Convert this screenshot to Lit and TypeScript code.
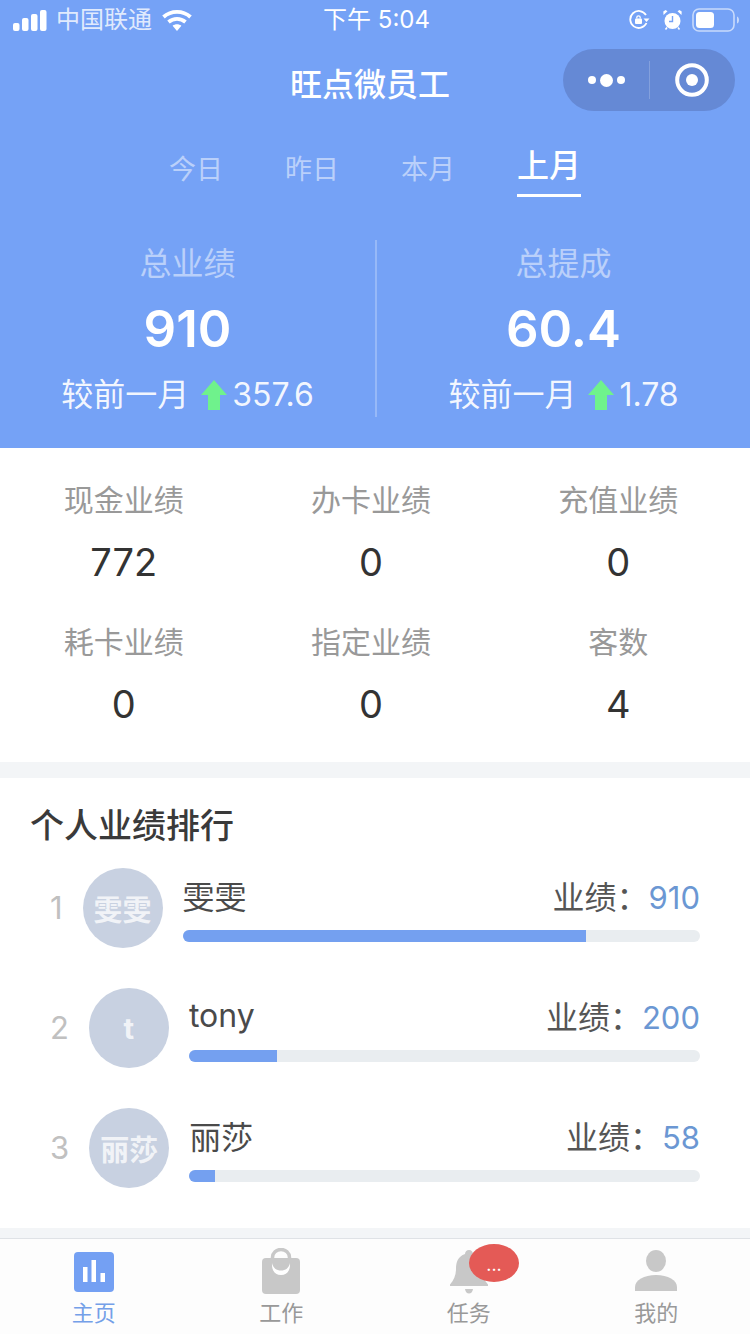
// Staff performance page: blue summary header, metric grid, ranking list and tab bar
import { LitElement, html, css, svg } from "lit";
import { customElement } from "lit/decorators.js";

const FONT_TABS = ["今日", "昨日", "本月", "上月"];

const SUMMARY = [
  { label: "总业绩", value: "910", diff: "357.6" },
  { label: "总提成", value: "60.4", diff: "1.78" },
];

const METRICS = [
  { label: "现金业绩", value: "772" },
  { label: "办卡业绩", value: "0" },
  { label: "充值业绩", value: "0" },
  { label: "耗卡业绩", value: "0" },
  { label: "指定业绩", value: "0" },
  { label: "客数", value: "4" },
];

const RANKS = [
  { rank: 1, avatar: "雯雯", name: "雯雯", score: "910", pct: 78 },
  { rank: 2, avatar: "t", name: "tony", score: "200", pct: 17.2 },
  { rank: 3, avatar: "丽莎", name: "丽莎", score: "58", pct: 5.1 },
];

const signalIcon = svg`<svg width="35" height="21" viewBox="0 0 35 21"><g fill="#fff">
  <rect x="0" y="13" width="6.500" height="8" rx="2"/><rect x="9" y="8" width="6.500" height="13" rx="2"/>
  <rect x="18" y="4" width="6.500" height="17" rx="2"/><rect x="27" y="0" width="6.500" height="21" rx="2"/></g></svg>`;

const wifiIcon = svg`<svg width="30" height="22" viewBox="0 0 30 22" fill="none" stroke="#fff" stroke-width="3.800">
  <path d="M1.500 8C9 1.200 21 1.200 28.500 8"/><path d="M6.500 13c5-4.200 12-4.200 17 0"/>
  <path d="M15 22l-4.400-5.300c2.500-2 6.300-2 8.800 0z" fill="#fff" stroke="none"/></svg>`;

const lockIcon = svg`<svg width="21" height="20" viewBox="0 0 21 20" fill="none" stroke="#fff" stroke-width="1.800">
  <path d="M17.500 13A8.500 8.500 0 1 1 17 5"/><path d="M14.500 8.500h6l-3 3.500z" fill="#fff" stroke="none"/>
  <rect x="6" y="8.500" width="7" height="5.500" rx="1" fill="#fff" stroke="none"/><path d="M7.800 8.500V7.500a1.700 1.700 0 0 1 3.400 0v1" stroke-width="1.300"/></svg>`;

const alarmIcon = svg`<svg width="19" height="20" viewBox="0 0 19 20">
  <circle cx="9.500" cy="11" r="8" fill="#fff"/><path d="M9.500 6v5.500H6" fill="none" stroke="#75a2f6" stroke-width="1.400"/>
  <path d="M.5 5l4-3.800L2.500 0 .3 1.600zM18.500 5l-4-3.800 2-1.200 2.200 1.600z" fill="#fff"/>
  <path d="M4 17.500l-1.500 2M15 17.500l1.500 2" stroke="#fff" stroke-width="1.600"/></svg>`;

const batteryIcon = svg`<svg width="48" height="24" viewBox="0 0 48 24">
  <rect x="1" y="1" width="41" height="22" rx="6" fill="none" stroke="#fff" stroke-opacity=".6" stroke-width="1.600"/>
  <rect x="4" y="4" width="18" height="16" rx="3.500" fill="#fff"/>
  <path d="M45 8.500c1.500.5 2 2 2 3.500s-.5 3-2 3.500z" fill="#fff" fill-opacity=".6"/></svg>`;

const targetIcon = svg`<svg width="34" height="34" viewBox="0 0 34 34">
  <circle cx="17" cy="17" r="14.800" fill="none" stroke="#fff" stroke-width="4"/><circle cx="17" cy="17" r="6" fill="#fff"/></svg>`;

const arrowIcon = svg`<svg width="26" height="30" viewBox="0 0 26 30"><path d="M13 0l13 15h-7v15H7V15H0z" fill="#6ff28c"/></svg>`;

const homeIcon = svg`<svg width="40" height="42" viewBox="0 -2 40 42"><rect width="40" height="40" rx="4" fill="#74a0f3"/>
  <g fill="#fff"><rect x="9" y="15" width="4.500" height="15"/><rect x="17.500" y="8" width="4.500" height="22"/><rect x="26.500" y="21" width="4.500" height="9"/></g></svg>`;

const bagIcon = svg`<svg width="38" height="46" viewBox="0 0 38 46">
  <path d="M10.500 13V9.500a8.500 8 0 0 1 17 0V13" fill="none" stroke="#c8c8c8" stroke-width="3.500"/>
  <path d="M4 10h30a4 4 0 0 1 4 4v28a4 4 0 0 1-4 4H4a4 4 0 0 1-4-4V14a4 4 0 0 1 4-4z" fill="#c8c8c8"/>
  <path d="M10 15c1 5 4.500 7.500 9 7.500s8-2.500 9-7.500c.500 7.500-3 12-9 12s-9.500-4.500-9-12z" fill="#fff"/></svg>`;

const bellIcon = svg`<svg width="38" height="46" viewBox="0 0 38 46" fill="#c8c8c8">
  <path d="M19 2c-2.500 0-4 1.700-4 4C8 8.500 6 14 6 21c0 6-2 11-6 15.500V38h38v-1.500C34 32 32 27 32 21c0-7-2-12.500-9-15 0-2.300-1.500-4-4-4z"/>
  <path d="M15 41h8c-.5 3-2 4.500-4 4.500s-3.500-1.500-4-4.500z"/></svg>`;

const userIcon = svg`<svg width="42" height="42" viewBox="0 0 42 42" fill="#c8c8c8">
  <ellipse cx="21" cy="11" rx="10" ry="11"/><path d="M0 41v-4c0-7 9-12 21-12s21 5 21 12v4z"/></svg>`;

const NAV = [
  { label: "主页", icon: homeIcon, active: true, badge: false },
  { label: "工作", icon: bagIcon, active: false, badge: false },
  { label: "任务", icon: bellIcon, active: false, badge: true },
  { label: "我的", icon: userIcon, active: false, badge: false },
];

@customElement("app-root")
export class AppRoot extends LitElement {
  static styles = css`
    :host {
      display: block;
      width: 750px;
      background: #fff;
      font-family: Inter, "Noto Sans CJK SC", sans-serif;
      color: #333;
    }
    .header {
      background: #75a2f6;
      color: #fff;
      padding-bottom: 31px;
    }
    .status {
      height: 40px;
      padding: 0 10px 0 13px;
      display: grid;
      grid-template-columns: 1fr auto 1fr;
      align-items: center;
      font-size: 24px;
      line-height: 34px;
    }
    .status-left,
    .status-right {
      display: flex;
      align-items: center;
    }
    .status-left {
      gap: 8px;
    }
    .carrier {
      color: rgba(255, 255, 255, 0.8);
      margin-right: 2px;
    }
    .status-right {
      justify-content: flex-end;
      gap: 10px;
    }
    .status-right svg:first-child {
      margin-right: 3px;
    }
    .status svg {
      display: block;
    }
    .nav {
      height: 90px;
      padding-right: 15px;
      display: grid;
      grid-template-columns: 1fr auto 1fr;
      align-items: center;
    }
    .title {
      grid-column: 2;
      font-size: 32px;
      font-weight: 500;
      line-height: 44px;
      padding-left: 5px;
    }
    .capsule {
      grid-column: 3;
      justify-self: end;
      align-self: start;
      margin-top: 9px;
      width: 172px;
      height: 62px;
      border-radius: 31px;
      background: #6589d5;
      display: flex;
      align-items: center;
    }
    .dots {
      width: 86px;
      display: flex;
      justify-content: center;
      align-items: center;
      gap: 4px;
    }
    .dots i {
      width: 8px;
      height: 8px;
      border-radius: 50%;
      background: #fff;
    }
    .dots i:nth-child(2) {
      width: 13px;
      height: 13px;
    }
    .capsule-line {
      width: 1px;
      height: 38px;
      background: rgba(255, 255, 255, 0.2);
    }
    .target {
      flex: 1;
      display: flex;
      justify-content: center;
      padding-right: 2px;
    }
    .tabs {
      margin-top: 16px;
      display: flex;
      justify-content: center;
      align-items: flex-end;
      gap: 62px;
    }
    .tab {
      font-size: 27px;
      line-height: 40px;
      padding-bottom: 7px;
      color: rgba(255, 255, 255, 0.5);
    }
    .tab.active {
      font-size: 32px;
      font-weight: 500;
      color: #fff;
      padding-bottom: 8px;
      border-bottom: 3px solid #fff;
    }
    .summary {
      margin-top: 43px;
      display: grid;
      grid-template-columns: 1fr 1fr;
    }
    .summary-col {
      display: flex;
      flex-direction: column;
      align-items: center;
    }
    .summary-col + .summary-col {
      border-left: 2px solid rgba(255, 255, 255, 0.25);
    }
    .summary-label {
      font-size: 32px;
      line-height: 46px;
      padding-top: 1px;
      color: rgba(255, 255, 255, 0.5);
    }
    .summary-value {
      margin-top: 12px;
      font-size: 51px;
      font-weight: 600;
      line-height: 60px;
    }
    .compare {
      margin-top: 14px;
      display: flex;
      align-items: center;
      font-size: 32px;
      line-height: 44px;
      color: rgba(255, 255, 255, 0.92);
    }
    .compare svg {
      margin: 0 5px 0 12px;
      display: block;
    }
    .metrics {
      padding: 32px 8px 33px 0;
      display: grid;
      grid-template-columns: repeat(3, 1fr);
      row-gap: 35px;
      text-align: center;
    }
    .metric-label {
      font-size: 30px;
      line-height: 40px;
      color: #999;
    }
    .metric-value {
      margin-top: 17px;
      font-size: 38px;
      line-height: 50px;
      color: #333;
    }
    .band {
      height: 16px;
      background: #f3f5f7;
    }
    .ranking {
      padding: 26px 50px 40px 30px;
    }
    .ranking h2 {
      margin: 0 0 20px;
      font-size: 34px;
      font-weight: 500;
      line-height: 44px;
      color: #3a3a3a;
    }
    .rows {
      padding-left: 20px;
      display: flex;
      flex-direction: column;
      gap: 40px;
    }
    .row {
      display: flex;
    }
    .rank {
      font-size: 31px;
      line-height: 80px;
      color: #c0c0c0;
    }
    .avatar {
      flex: none;
      width: 80px;
      height: 80px;
      margin-left: 20px;
      border-radius: 50%;
      background: #c8d1e1;
      color: rgba(255, 255, 255, 0.75);
      font-size: 29px;
      font-weight: 700;
      display: flex;
      align-items: center;
      justify-content: center;
    }
    .body {
      flex: 1;
      margin-left: 20px;
      padding-top: 5px;
    }
    .line {
      height: 44px;
      display: flex;
      justify-content: space-between;
      align-items: center;
    }
    .name {
      font-size: 32px;
      color: #4a4a4a;
    }
    .score {
      font-size: 32px;
      color: #555;
    }
    .score b {
      font-size: 31px;
      font-weight: 400;
      color: #6b97d3;
    }
    .track {
      margin-top: 13px;
      height: 12px;
      border-radius: 6px;
      background: #e9edf0;
      overflow: hidden;
    }
    .fill {
      height: 100%;
      background: #74a0f0;
    }
    .gap-band {
      height: 10px;
      background: #f3f5f7;
      border-bottom: 1px solid #dfe2e6;
    }
    .tabbar {
      padding-top: 9px;
      height: 86px;
      display: grid;
      grid-template-columns: repeat(4, 1fr);
      background: #fdfdfd;
    }
    .tabbar-item {
      position: relative;
      display: flex;
      flex-direction: column;
      align-items: center;
      font-size: 22px;
      color: #999;
    }
    .tabbar-item.active {
      color: #74a0e8;
    }
    .tabbar-icon {
      height: 46px;
      display: flex;
      align-items: center;
    }
    .tabbar-icon svg {
      display: block;
    }
    .tabbar-label {
      margin-top: 4px;
      line-height: 30px;
    }
    .badge {
      position: absolute;
      top: -4px;
      left: 94px;
      width: 50px;
      height: 38px;
      border-radius: 25px / 19px;
      background: #e45a56;
      color: #fff;
      font-size: 18px;
      line-height: 42px;
      text-align: center;
    }
  `;

  render() {
    return html`
      <div class="header">
        <div class="status">
          <div class="status-left">
            ${signalIcon}<span class="carrier">中国联通</span>${wifiIcon}
          </div>
          <div>下午 5:04</div>
          <div class="status-right">${lockIcon}${alarmIcon}${batteryIcon}</div>
        </div>
        <div class="nav">
          <div class="title">旺点微员工</div>
          <div class="capsule">
            <div class="dots"><i></i><i></i><i></i></div>
            <div class="capsule-line"></div>
            <div class="target">${targetIcon}</div>
          </div>
        </div>
        <div class="tabs">
          ${FONT_TABS.map(
            (t) => html`<div class="tab ${t === "上月" ? "active" : ""}">${t}</div>`
          )}
        </div>
        <div class="summary">
          ${SUMMARY.map(
            (s) => html`
              <div class="summary-col">
                <div class="summary-label">${s.label}</div>
                <div class="summary-value">${s.value}</div>
                <div class="compare">较前一月${arrowIcon}<span>${s.diff}</span></div>
              </div>
            `
          )}
        </div>
      </div>

      <div class="metrics">
        ${METRICS.map(
          (m) => html`
            <div>
              <div class="metric-label">${m.label}</div>
              <div class="metric-value">${m.value}</div>
            </div>
          `
        )}
      </div>
      <div class="band"></div>

      <div class="ranking">
        <h2>个人业绩排行</h2>
        <div class="rows">
          ${RANKS.map(
            (r) => html`
              <div class="row">
                <div class="rank">${r.rank}</div>
                <div class="avatar">${r.avatar}</div>
                <div class="body">
                  <div class="line">
                    <span class="name">${r.name}</span>
                    <span class="score">业绩：<b>${r.score}</b></span>
                  </div>
                  <div class="track">
                    <div class="fill" style="width: ${r.pct}%"></div>
                  </div>
                </div>
              </div>
            `
          )}
        </div>
      </div>
      <div class="gap-band"></div>

      <div class="tabbar">
        ${NAV.map(
          (n) => html`
            <div class="tabbar-item ${n.active ? "active" : ""}">
              <div class="tabbar-icon">${n.icon}</div>
              <div class="tabbar-label">${n.label}</div>
              ${n.badge ? html`<div class="badge">...</div>` : ""}
            </div>
          `
        )}
      </div>
    `;
  }
}
